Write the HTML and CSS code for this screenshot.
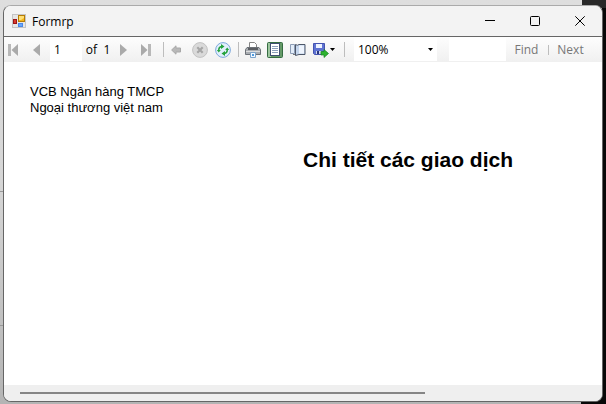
FILE: index.html
```
<!DOCTYPE html>
<html lang="vi">
<head>
<meta charset="utf-8">
<title>Formrp</title>
<link rel="stylesheet" href="styles.css">
</head>
<body>
<div class="window">
  <header class="titlebar">
    <svg class="app-icon" width="14" height="14" viewBox="0 0 14 14" aria-hidden="true">
      <rect x=".5" y=".5" width="13" height="13" fill="#e6e6e6" stroke="#c4c4c4"/>
      <rect x="6.500" y="1.500" width="6" height="6" fill="#f3b51b" stroke="#b67c05"/>
      <path d="M7 2h5v2L9 6H7z" fill="#ffdf72"/>
      <rect x="1.500" y="5.500" width="3" height="4" fill="#d93a2b" stroke="#9c1515"/>
      <rect x="6.500" y="9.500" width="4" height="3" fill="#69a8fa" stroke="#4c87e6"/>
    </svg>
    <h1 class="title">Formrp</h1>
    <div class="window-buttons">
      <button aria-label="Minimize"><svg width="10" height="10"><path d="M0 4.500h10" stroke="#000"/></svg></button>
      <button aria-label="Maximize"><svg width="10" height="10"><rect x=".5" y=".5" width="9" height="9" rx="1" fill="none" stroke="#000"/></svg></button>
      <button aria-label="Close"><svg width="10" height="10"><path d="M.3.3l9.400 9.400M9.700.3L.3 9.700" stroke="#000"/></svg></button>
    </div>
  </header>
  <div class="toolbar">
    <button aria-label="First page"><svg width="10" height="12"><path d="M0 0h3v12H0z" fill="#b8b8b8"/><path d="M10 0v12L3.500 6z" fill="#aaa"/></svg></button>
    <button aria-label="Previous page"><svg width="7" height="12"><path d="M7 0v12L0 6z" fill="#aaa"/></svg></button>
    <input class="field" type="text" value="1" aria-label="Current page">
    <span>of</span>
    <span>1</span>
    <button aria-label="Next page"><svg width="7" height="12"><path d="M0 0v12l7-6z" fill="#aaa"/></svg></button>
    <button aria-label="Last page"><svg width="10" height="12"><path d="M7 0h3v12H7z" fill="#b8b8b8"/><path d="M0 0v12l6.500-6z" fill="#aaa"/></svg></button>
    <i class="separator"></i>
    <button class="back" aria-label="Back"><svg width="10" height="10"><path d="M.6 5L5 .8V3h4.500v4H5v2.200z" fill="#b8b8b8" stroke="#a8a8a8"/></svg></button>
    <button aria-label="Stop"><svg width="16" height="16"><circle cx="8" cy="8" r="7.400" fill="#dadada" stroke="#c2c2c2"/><path d="M5.300 5.300l5.400 5.400M10.700 5.300l-5.400 5.400" stroke="#a6a6a6" stroke-width="2.200"/></svg></button>
    <button aria-label="Refresh"><svg width="16" height="16"><circle cx="8" cy="8" r="7.400" fill="#e1effc" stroke="#7fa9dc"/><path d="M3.800 9V7.500Q4 5 6.500 4.500M12.200 7v1.500q-.2 2.500-2.700 3" fill="none" stroke="#25a33c" stroke-width="1.500"/><path d="M6 2l3.500 2.500L6 7zM10 9l-3.500 2.500L10 14z" fill="#25a33c"/><path d="M1.800 8h4L3.800 10.500zM10.200 8h4l-2-2.500z" fill="#25a33c"/></svg></button>
    <i class="separator"></i>
    <button aria-label="Print"><svg width="16" height="16"><path d="M4.500 6.500v-6h5l2 2v4z" fill="#fff" stroke="#858585"/><path d="M2 5.500h12l1.500 2v5H.5v-5z" fill="#a9adb2" stroke="#6c7177"/><path d="M3 6h10v2H3z" fill="#5a5d62"/><path d="M1 9.500h14" stroke="#ddd"/><path d="M5.500 10.500h5v5h-5z" fill="#f2f8ff" stroke="#7da4cb"/><path d="M7 12h2v2H7z" fill="#4d9ade"/></svg></button>
    <button aria-label="Print layout"><svg width="16" height="16"><rect x=".5" y=".5" width="15" height="15" rx="1" fill="#659a68" stroke="#356c42"/><path d="M1 1h3v14H1z" fill="#9dc69f"/><rect x="3.500" y="1.500" width="9" height="12" fill="#fff" stroke="#3e4e70"/><path d="M5 4.500h6M5 6.500h6M5 8.500h6M5 10.500h6" stroke="#8ba0bc"/></svg></button>
    <button aria-label="Page setup"><svg width="16" height="16"><path d="M.5 2.500h4v9h-4z" fill="#e3edf9" stroke="#8d9db6"/><path d="M3 12.500h3.500V6" fill="none" stroke="#777"/><path d="M5.500 2.500q2 1.500 3.500 0h6v10H9l-3.500 1z" fill="#c5d6ed" stroke="#4d5769"/><path d="M9 3.500h5v8H9z" fill="#eef4fd"/></svg></button>
    <button class="export" aria-label="Export">
      <svg width="16" height="16"><path d="M.5 1.500h11v11h-10l-1-1z" fill="#5f73d2" stroke="#4453b0"/><path d="M3 2h6v4H3z" fill="#edf3ff"/><path d="M3 9h6v3H3z" fill="#d2d9ed"/><path d="M4 9h2v3H4z" fill="#29377f"/><path d="M8 9.500h3V7.500l4.500 4L11 15.500v-2.500H8z" fill="#2db32f" stroke="#168421" stroke-width=".7"/></svg>
      <svg width="5" height="3"><path d="M0 0h5L2.500 3z"/></svg>
    </button>
    <i class="separator"></i>
    <div class="zoom">
      <select class="field" aria-label="Zoom"><option>100%</option></select>
      <svg class="caret" width="5" height="3"><path d="M0 0h5L2.500 3z"/></svg>
    </div>
    <input class="field search" type="text" aria-label="Find text">
    <button class="word">Find</button>
    <i class="separator short"></i>
    <button class="word">Next</button>
  </div>
  <main class="report">
    <p class="bank">VCB Ngân hàng TMCP<br>Ngoại thương việt nam</p>
    <h2 class="heading">Chi tiết các giao dịch</h2>
  </main>
  <footer class="scrollbar"><div class="thumb"></div></footer>
</div>
</body>
</html>
```
FILE: styles.css
```
* { box-sizing: border-box; }
html { height: 100%; }
body {
  margin: 0;
  height: 100%;
  padding: 5px 3px 2px;
  background:
    linear-gradient(#292929, #292929) right top / 24px 8px no-repeat,
    linear-gradient(#080808, #080808) right top / 4px 100% no-repeat,
    linear-gradient(#080808, #080808) right bottom / 25px 8px no-repeat,
    linear-gradient(#999, #999) 0 191px / 4px 1px no-repeat,
    linear-gradient(#999, #999) 0 325px / 4px 1px no-repeat,
    linear-gradient(#dedede, #d6d6d6 45%, #b4b4b4);
  font-family: "Open Sans", "Noto Sans", sans-serif;
  font-size: 12px;
  color: #000;
}
button, input, select {
  margin: 0;
  padding: 0;
  border: 0;
  background: none;
  font: inherit;
  color: inherit;
}
button {
  display: flex;
  align-items: center;
  justify-content: center;
}
svg { display: block; flex: none; }
.window {
  display: flex;
  flex-direction: column;
  height: 100%;
  border: 1px solid #666;
  border-top-color: #aaa;
  border-radius: 8px;
  overflow: hidden;
  background: #fff;
}
.titlebar {
  display: flex;
  align-items: center;
  height: 31px;
  padding-left: 8px;
  background: #f3f3f3;
  border-bottom: 1px solid #666;
}
.title {
  margin: 0 0 0 6px;
  font-size: 12px;
  font-weight: 400;
}
.window-buttons {
  display: flex;
  align-self: stretch;
  margin-left: auto;
}
.window-buttons button { width: 45px; }
.toolbar {
  display: grid;
  grid-template-columns:
    18px 28px 32px 19px 12px 21px 24px 11px
    19px 24px 22px 8px
    21px 24px 22px 29px 12px
    87px 69px 41px 3px 41px;
  height: 25px;
  align-items: center;
  justify-items: center;
  background: linear-gradient(#fdfdfd, #f0f0f0);
}
.field {
  width: 100%;
  height: 23px;
  padding: 0 4px;
  background: #fff;
}
.separator {
  width: 1px;
  height: 15px;
  background: #bdbdbd;
}
.short { height: 10px; }
.back {
  justify-self: start;
  padding-left: 2px;
}
.export { gap: 1px; }
.zoom {
  position: relative;
  width: 100%;
  padding-left: 4px;
}
.zoom .field { appearance: none; display: block; }
.search {
  width: 57px;
  justify-self: end;
}
.caret {
  position: absolute;
  right: 4px;
  top: 10px;
  pointer-events: none;
}
.word { color: #777; }
.report {
  flex: 1;
  padding: 22px 26px;
  font-family: "Liberation Sans", Arial, sans-serif;
}
.bank {
  margin: 0;
  font-size: 13px;
  line-height: 16px;
}
.heading {
  margin: 32px 0 0;
  padding-left: 50%;
  font-size: 21px;
  line-height: 24px;
  white-space: nowrap;
}
.scrollbar {
  height: 16px;
  padding: 7px 16px;
  background: #efefef;
}
.thumb {
  width: 71.5%;
  height: 2px;
  background: #858585;
}
```
